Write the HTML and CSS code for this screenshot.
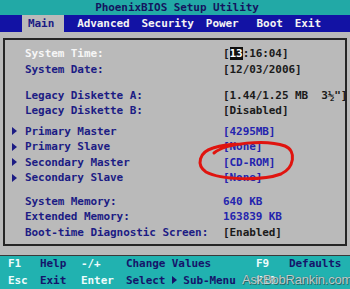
FILE: index.html
```html
<!DOCTYPE html>
<html lang="en">
<head>
    <meta charset="UTF-8">
    <title>PhoenixBIOS Setup Utility</title>
    <link rel="stylesheet" href="styles.css">
</head>
<body>
    <div class="screen">
        <div class="title-bar">PhoenixBIOS Setup Utility</div>

        <div class="menu-bar">
            <span class="menu-item active">Main</span>
            <span class="menu-item">Advanced</span>
            <span class="menu-item">Security</span>
            <span class="menu-item">Power</span>
            <span class="menu-item boot">Boot</span>
            <span class="menu-item">Exit</span>
        </div>

        <div class="main">
            <div class="panel">
                <div class="group">
                    <div class="row selected">
                        <span></span><span class="label">System Time:</span>
                        <span class="value">[<span class="cursor">13</span>:16:04]</span>
                    </div>
                    <div class="row">
                        <span></span><span class="label">System Date:</span>
                        <span class="value">[12/03/2006]</span>
                    </div>
                </div>

                <div class="group legacy">
                    <div class="row">
                        <span></span><span class="label">Legacy Diskette A:</span>
                        <span class="value">[1.44/1.25 MB&nbsp;&nbsp;3½"]</span>
                    </div>
                    <div class="row">
                        <span></span><span class="label">Legacy Diskette B:</span>
                        <span class="value">[Disabled]</span>
                    </div>
                </div>

                <div class="group drives">
                    <div class="row">
                        <span class="arrow"></span><span class="label">Primary Master</span>
                        <span class="value blue">[4295MB]</span>
                    </div>
                    <div class="row">
                        <span class="arrow"></span><span class="label">Primary Slave</span>
                        <span class="value blue">[None]</span>
                    </div>
                    <div class="row">
                        <span class="arrow"></span><span class="label">Secondary Master</span>
                        <span class="value blue">[CD-ROM]</span>
                    </div>
                    <div class="row">
                        <span class="arrow"></span><span class="label">Secondary Slave</span>
                        <span class="value blue">[None]</span>
                    </div>
                </div>

                <div class="group memory">
                    <div class="row">
                        <span></span><span class="label">System Memory:</span>
                        <span class="value blue">640 KB</span>
                    </div>
                    <div class="row">
                        <span></span><span class="label">Extended Memory:</span>
                        <span class="value blue">163839 KB</span>
                    </div>
                    <div class="row">
                        <span></span><span class="label">Boot-time Diagnostic Screen:</span>
                        <span class="value">[Enabled]</span>
                    </div>
                </div>
            </div>
        </div>

        <div class="footer">
            <span class="key">F1</span><span class="desc">Help</span>
            <span class="key">-/+</span><span class="desc">Change Values</span>
            <span class="key">F9</span><span class="desc">Defaults</span>

            <span class="key">Esc</span><span class="desc">Exit</span>
            <span class="key">Enter</span><span class="desc">Select <span class="tri"></span> Sub-Menu</span>
            <span class="key">F10</span><span class="desc"></span>
        </div>

        <div class="watermark">AskBobRankin.com</div>

        <!-- hand drawn red circle around the CD-ROM drive -->
        <svg class="scribble" width="350" height="289" viewBox="0 0 350 289">
            <path d="M 214 153 C 226 143, 266 139, 285 146 C 297 151, 294 168, 281 174 C 262 181, 221 180, 206 172 C 196 165, 199 152, 213 148 C 222 145, 232 144, 242 144"
                  fill="none" stroke="#e0140f" stroke-width="3" stroke-linecap="round"/>
        </svg>
    </div>
</body>
</html>
```

FILE: styles.css
```css
/* Reset */
* {
    box-sizing: border-box;
    margin: 0;
    padding: 0;
}

body {
    background: #000;
    font-family: "DejaVu Sans Mono", "Liberation Mono", monospace;
    font-weight: bold;
    font-size: 11px;
    letter-spacing: -0.08px;
}

/* Screen */
.screen {
    position: relative;
    width: 350px;
    height: 289px;
    overflow: hidden;
    background: #bababa;
}

/* Title + menu */
.title-bar {
    height: 15px;
    line-height: 15px;
    background: #22a9a6;
    color: #14145e;
    text-align: center;
    padding-left: 4px;
}

.menu-bar {
    display: flex;
    gap: 12px;
    height: 17px;
    line-height: 17px;
    background: #1212a4;
    color: #f4f4f4;
    padding-left: 22px;
}

.menu-item.active {
    background: #bababa;
    color: #1c1c84;
    padding: 0 10px 0 6px;
    margin-right: 1px;
}

.menu-item.boot {
    margin-left: 6px;
}

/* Main panel */
.main {
    height: 223px;
    padding: 6px 3px 0 3px;
}

.panel {
    height: 208px;
    border: 2px solid #262626;
    padding: 6px 0 0 7px;
}

.group.legacy {
    margin-top: 10.5px;
}

.group.drives {
    margin-top: 5px;
}

.group.memory {
    margin-top: 8px;
}

.row {
    display: grid;
    grid-template-columns: 13px 198px 1fr;
    align-items: center;
    height: 15.5px;
    line-height: 15.5px;
    color: #1c1c84;
    white-space: nowrap;
}

.row.selected .label {
    color: #f6f6f6;
}

.value {
    color: #1a1a1a;
}

.value.blue {
    color: #2424ae;
}

.cursor {
    background: #111;
    color: #fff;
}

.arrow {
    width: 0;
    height: 0;
    border-left: 5px solid #1c1c84;
    border-top: 4px solid transparent;
    border-bottom: 4px solid transparent;
}

/* Footer key help */
.footer {
    display: grid;
    grid-template-columns: 32px 41px 45px 130px 33px 1fr;
    height: 35px;
    border-top: 1px solid #3a3a3a;
    background: #21b2b0;
    padding: 0 0 0 8px;
    line-height: 15px;
    white-space: nowrap;
}

.key {
    color: #eefcfc;
}

.desc {
    color: #15156a;
}

.tri {
    display: inline-block;
    width: 0;
    height: 0;
    border-left: 5px solid #15156a;
    border-top: 4px solid transparent;
    border-bottom: 4px solid transparent;
}

/* Overlays */
.watermark {
    position: absolute;
    left: 242px;
    top: 272px;
    font-family: "Liberation Sans", Arial, sans-serif;
    font-weight: normal;
    font-size: 13px;
    letter-spacing: -0.2px;
    color: rgba(235, 240, 240, 0.75);
    text-shadow: 0 0 1px #3a5a5a, 1px 1px 0 rgba(40, 60, 60, 0.6);
}

.scribble {
    position: absolute;
    left: 0;
    top: 0;
    pointer-events: none;
}
```
